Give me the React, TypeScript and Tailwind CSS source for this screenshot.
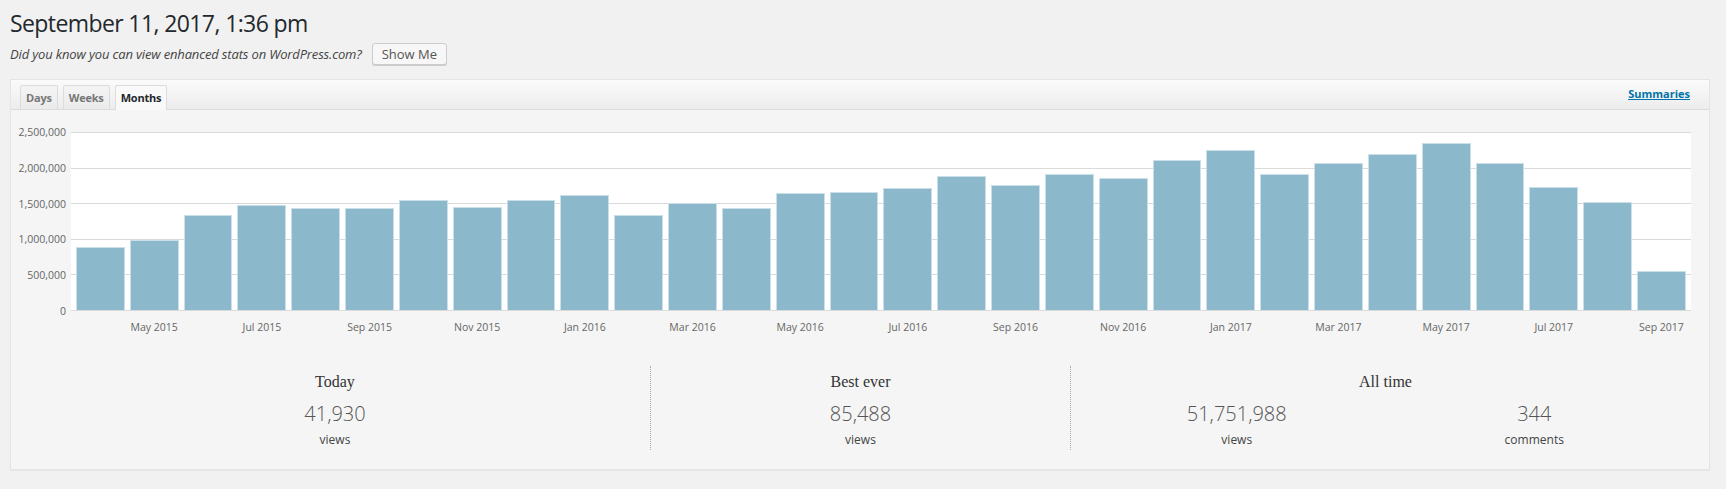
const MONTHS = ['Jan', 'Feb', 'Mar', 'Apr', 'May', 'Jun', 'Jul', 'Aug', 'Sep', 'Oct', 'Nov', 'Dec'];

// monthly views in millions, Apr 2015 .. Sep 2017
const VIEWS = [
  0.881, 0.979, 1.329, 1.478, 1.437, 1.427, 1.539, 1.451, 1.549, 1.609,
  1.334, 1.502, 1.427, 1.646, 1.651, 1.712, 1.884, 1.749, 1.903, 1.847,
  2.108, 2.248, 1.912, 2.066, 2.192, 2.351, 2.066, 1.721, 1.521, 0.541,
];

const bars = VIEWS.map((v, i) => {
  const m = (3 + i) % 12;
  const y = 2015 + Math.floor((3 + i) / 12);
  return { value: v, label: `${MONTHS[m]} ${y}` };
});

const Y_TICKS = ['2,500,000', '2,000,000', '1,500,000', '1,000,000', '500,000', '0'];

function Tab({ label, active }: { label: string; active?: boolean }) {
  return (
    <div
      className={
        active
          ? 'h-[25px] px-[5px] border border-b-0 border-[#dcdcdc] bg-[#f9f9f9] text-[#23282d] text-[11px] font-bold tracking-[-0.2px] leading-[23px] rounded-t-[2px] -mb-px'
          : 'h-[24px] px-[5px] border border-b-0 border-[#dcdcdc] bg-gradient-to-b from-[#f4f4f4] to-[#ebebeb] text-[#777] text-[11px] font-bold tracking-[-0.2px] leading-[23px] rounded-t-[2px]'
      }
    >
      {label}
    </div>
  );
}

function Stat({ value, label }: { value: string; label: string }) {
  return (
    <div className="flex flex-col items-center">
      <div className="text-[20px] font-light leading-[28px] text-[#555]">{value}</div>
      <div className="mt-[4px] text-[12px] leading-[16px] text-[#444]">{label}</div>
    </div>
  );
}

function StatTitle({ children }: { children: string }) {
  return (
    <div className="text-[16px] leading-[20px] text-[#333] mb-[8px]" style={{ fontFamily: '"Liberation Serif", serif' }}>
      {children}
    </div>
  );
}

export default function App() {
  return (
    <div className="min-h-screen bg-[#f1f1f1] pl-[10px] pr-[16px] text-[#444]" style={{ fontFamily: '"Open Sans", sans-serif' }}>
      <h1 className="pt-[9px] pb-[4px] text-[23px] leading-[29.9px] font-normal tracking-[-0.6px] text-[#23282d]">
        September 11, 2017, 1:36 pm
      </h1>
      <div className="flex items-center h-[23px]">
        <em className="text-[13px] tracking-[-0.15px] text-[#444]">Did you know you can view enhanced stats on WordPress.com?</em>
        <button className="ml-[10px] h-[22px] px-[9px] text-[13px] leading-[20px] text-[#555] bg-[#f7f7f7] border border-[#ccc] rounded-[3px] shadow-[0_1px_0_#ccc]">
          Show Me
        </button>
      </div>

      <div className="mt-[13px] border border-[#e5e5e5] bg-[#f5f5f5] shadow-[0_1px_1px_rgba(0,0,0,0.04)]">
        <div className="h-[30px] flex items-end justify-between pl-[9px] pr-[19px] bg-gradient-to-b from-[#fbfbfb] to-[#ececec] border-b border-[#dcdcdc]">
          <div className="flex items-end gap-[5px]">
            <Tab label="Days" />
            <Tab label="Weeks" />
            <Tab label="Months" active />
          </div>
          <a href="#" className="mb-[8px] text-[11px] font-bold text-[#0073aa] underline leading-[14px]">
            Summaries
          </a>
        </div>

        <div className="pt-[22px] pr-[18px]">
          <div className="flex">
            <div className="w-[55px] h-[191px] -mt-[6px] flex flex-col justify-between text-right text-[10.5px] leading-[12px] text-[#666]">
              {Y_TICKS.map((t) => (
                <div key={t}>{t}</div>
              ))}
            </div>
            <div className="ml-[5px] flex-1">
              <div className="relative h-[179px] bg-white">
                <div className="absolute inset-0 flex flex-col justify-between">
                  {Y_TICKS.map((t) => (
                    <div key={t} className="h-px bg-[#dadada]" />
                  ))}
                </div>
                <div className="absolute inset-x-0 top-0 bottom-[1px] flex items-end gap-[5px] px-[5px]">
                  {bars.map((b) => (
                    <div
                      key={b.label}
                      className="flex-1 bg-[#8cb8cb] border border-b-0 border-[#cadfe8]"
                      style={{ height: `${(b.value / 2.5) * 178}px` }}
                    />
                  ))}
                </div>
              </div>
              <div className="mt-[9px] flex gap-[5px] px-[5px] text-[10.5px] leading-[14px] text-[#666]">
                {bars.map((b, i) => (
                  <div key={b.label} className="flex-1 flex justify-center whitespace-nowrap">
                    {i % 2 === 1 ? b.label : ''}
                  </div>
                ))}
              </div>
            </div>
          </div>
        </div>

        <div className="mt-[32px] mb-[19px] mx-[9px] grid grid-cols-[3fr_2fr_3fr] h-[84px]">
          <div className="flex flex-col items-center pt-[6px]">
            <StatTitle>Today</StatTitle>
            <Stat value="41,930" label="views" />
          </div>
          <div className="flex flex-col items-center pt-[6px] border-l border-dotted border-[#aaa]">
            <StatTitle>Best ever</StatTitle>
            <Stat value="85,488" label="views" />
          </div>
          <div className="flex flex-col items-center pt-[6px] border-l border-dotted border-[#aaa]">
            <StatTitle>All time</StatTitle>
            <div className="w-full grid grid-cols-2 px-[17px]">
              <Stat value="51,751,988" label="views" />
              <Stat value="344" label="comments" />
            </div>
          </div>
        </div>
      </div>
    </div>
  );
}
